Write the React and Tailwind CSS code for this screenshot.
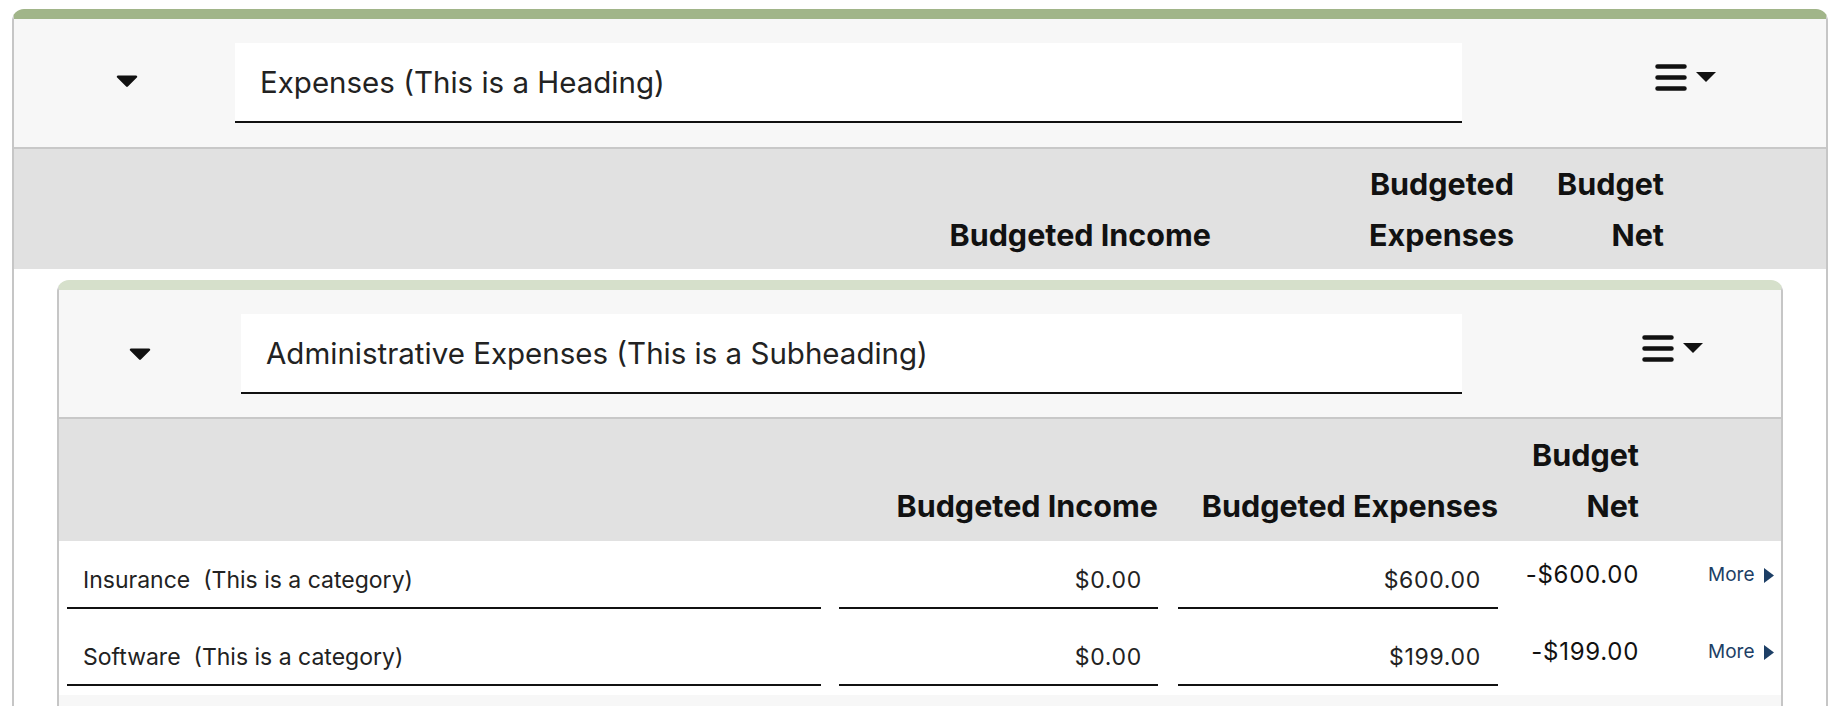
import React from 'react';

const rows = [
  { name: 'Insurance', income: '$0.00', expenses: '$600.00', net: '-$600.00' },
  { name: 'Software', income: '$0.00', expenses: '$199.00', net: '-$199.00' },
];

function Caret({ className }) {
  return (
    <svg viewBox="0 0 22 12" className={className}>
      <path d="M2 0.5h18a1.2 1.2 0 0 1 .85 2.05l-9 9a1.2 1.2 0 0 1-1.7 0l-9-9A1.2 1.2 0 0 1 2 0.5z" fill="#111" />
    </svg>
  );
}

function MenuButton({ className }) {
  return (
    <div className={`flex items-start ${className}`}>
      <svg width="32" height="27" viewBox="0 0 32 27">
        <g stroke="#111" strokeWidth="4.5" strokeLinecap="round">
          <path d="M2.5 2.5h27M2.5 13.5h27M2.5 24.5h27" />
        </g>
      </svg>
      <svg width="20" height="10" viewBox="0 0 20 10" className="ml-[9px] mt-[8px]">
        <path d="M0 0h20l-10 10z" fill="#111" />
      </svg>
    </div>
  );
}

function TitleInput({ className, children }) {
  return (
    <div
      className={`h-[80px] bg-white border-b-2 border-[#111] flex items-center pl-[25px] text-[29.5px] text-[#222] ${className}`}
    >
      {children}
    </div>
  );
}

function CategoryRow({ row }) {
  return (
    <div className="flex items-start bg-white pl-[8px] pt-[12px] pb-[9px]">
      <div className="w-[754px] h-[56px] border-b-2 border-[#111] flex items-center pl-[16px] text-[23px] text-[#222] whitespace-pre">
        {row.name + '  (This is a category)'}
      </div>
      <div className="ml-[18px] w-[319px] h-[56px] border-b-2 border-[#111] flex items-center justify-end pr-[16px] text-[23px] tracking-[0.03em] text-[#222]">
        {row.income}
      </div>
      <div className="ml-[20px] w-[320px] h-[56px] border-b-2 border-[#111] flex items-center justify-end pr-[17px] text-[23px] tracking-[0.03em] text-[#222]">
        {row.expenses}
      </div>
      <div className="w-[141px] mt-[7px] text-right text-[24px] tracking-[0.03em] leading-[30px] text-[#111]">{row.net}</div>
      <div className="ml-[69px] mt-[7px] h-[30px] flex items-center text-[19px] text-[#1d3f66]">
        More
        <svg width="10" height="15" viewBox="0 0 10 15" className="ml-[10px]">
          <path d="M0 0l10 7.5L0 15z" fill="#1d3f66" />
        </svg>
      </div>
    </div>
  );
}

export default function App() {
  return (
    <div className="min-h-screen bg-white pt-[9px] px-[12px] font-['Inter','Liberation_Sans',sans-serif] text-[#111]">
      <div className="rounded-t-[12px] border-x-2 border-t-[10px] border-x-[#c6c6c6] border-t-[#a1b589]">
        {/* heading */}
        <div className="flex items-center bg-[#f7f7f7] pt-[24px] pb-[24px] border-b-2 border-[#c8c8c8]">
          <Caret className="ml-[102px] mb-[4px] w-[22px] h-[12px]" />
          <TitleInput className="ml-[97px] w-[1227px]">Expenses (This is a Heading)</TitleInput>
          <MenuButton className="ml-[193px] mb-[12px]" />
        </div>
        <div className="flex items-end justify-end bg-[#e1e1e1] h-[120px] pb-[9px] pr-[162px] text-[30.5px] font-bold leading-[51px]">
          <div className="w-[320px] text-right">Budgeted Income</div>
          <div className="ml-[63px] w-[240px] text-right">Budgeted Expenses</div>
          <div className="ml-[20px] w-[130px] text-right">Budget Net</div>
        </div>

        {/* subheading */}
        <div className="mx-[43px] mt-[11px] rounded-t-[12px] border-x-2 border-t-[10px] border-x-[#c6c6c6] border-t-[#d6e0cb]">
          <div className="flex items-center bg-[#f7f7f7] pt-[24px] pb-[23px] border-b-2 border-[#c8c8c8]">
            <Caret className="ml-[70px] w-[22px] h-[12px]" />
            <TitleInput className="ml-[90px] w-[1221px]">Administrative Expenses (This is a Subheading)</TitleInput>
            <MenuButton className="ml-[180px] mb-[11px]" />
          </div>
          <div className="flex items-end bg-[#e1e1e1] h-[122px] pb-[10px] text-[30.5px] font-bold leading-[51px]">
            <div className="w-[762px]" />
            <div className="ml-[18px] w-[319px] text-right">Budgeted Income</div>
            <div className="ml-[20px] w-[320px] text-right">Budgeted Expenses</div>
            <div className="w-[141px] text-right">Budget Net</div>
          </div>
          {rows.map((r) => (
            <CategoryRow key={r.name} row={r} />
          ))}
          <div className="h-[60px] bg-[#f7f7f7]" />
        </div>
      </div>
    </div>
  );
}
